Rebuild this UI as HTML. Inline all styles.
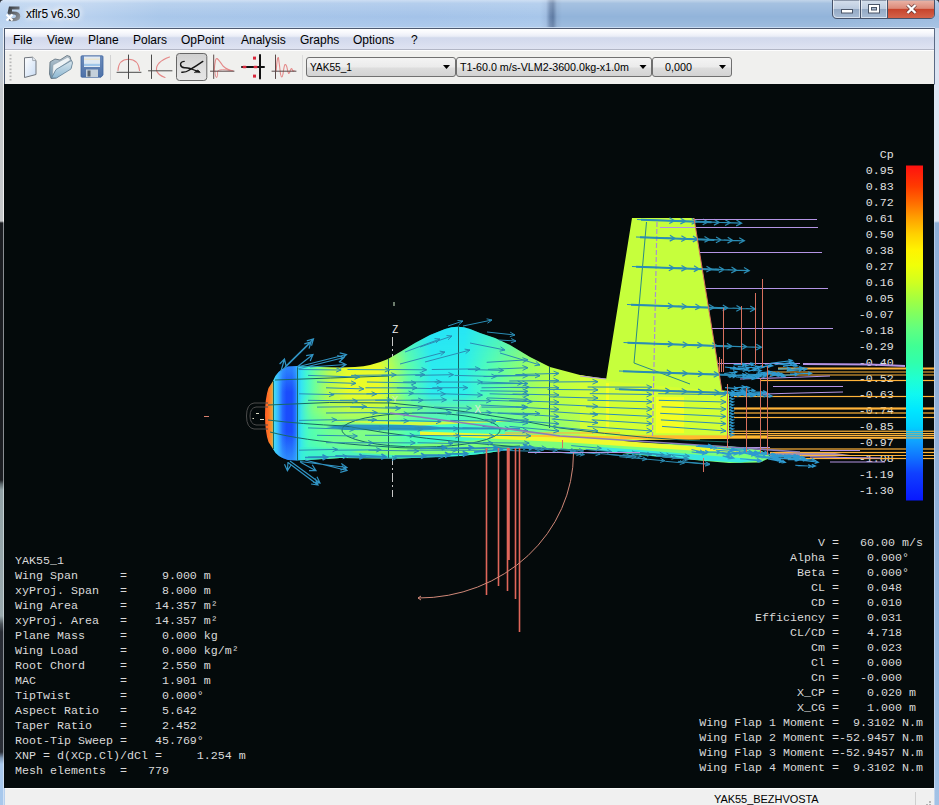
<!DOCTYPE html>
<html>
<head>
<meta charset="utf-8">
<title>xflr5 v6.30</title>
<style>
html,body{margin:0;padding:0;}
body{width:939px;height:805px;overflow:hidden;position:relative;background:#9fbfe6;font-family:"Liberation Sans",sans-serif;}
#frame{position:absolute;left:0;top:0;width:939px;height:805px;
 background:linear-gradient(90deg,#b6d0ee 0px,#bdd4f0 60px,#a9c7ea 160px,#a4c3e9 420px,#a7c6ea 540px,#9dbbe0 546px,#6b88b0 550px,#5d7aa2 553px,#8aaad0 557px,#92b4da 562px,#92b4da 830px,#9dbce0 939px);}
#frameL{position:absolute;left:0;top:28px;width:4px;height:777px;
 background:linear-gradient(180deg,#b2cbe8 0px,#bccbdc 30px,#c6c9cc 60px,#c4c6c8 193px,#1b1d21 195px,#1b1d21 452px,#5a666a 456px,#92a2a6 462px,#98a8ac 588px,#4a5258 596px,#282c34 604px,#2a2e36 724px,#7f9ab8 730px,#a8c8ec 736px,#a8c8ec 777px);}
#frameL2{position:absolute;left:3px;top:28px;width:1px;height:777px;
 background:linear-gradient(180deg,#e8eef6 0px,#f0f0f0 60px,#f0f0f0 193px,#8a8e92 195px,#8a8e92 452px,#c4d0d2 462px,#c4d0d2 588px,#8a9096 604px,#8a9096 724px,#d0e0f4 736px,#d0e0f4 777px);}
#frameL3{position:absolute;left:4px;top:28px;width:1px;height:56px;background:#4a5870;}
#frameR{position:absolute;left:935px;top:28px;width:4px;height:777px;
 background:linear-gradient(180deg,#cfdcf0 0px,#dde5f3 40px,#dfe6f4 193px,#90b0d8 195px,#92b2da 500px,#a2c2e6 777px);}
#frameR2{position:absolute;left:934px;top:28px;width:1px;height:777px;background:linear-gradient(180deg,#5a6a84 0px,#5a6a84 56px,#dfe8f2 57px,#dfe8f2 193px,#b8cce4 195px,#c4d6ec 777px);}
#titletxt{position:absolute;left:26px;top:6.500px;font-size:12px;letter-spacing:-0.15px;color:#000;text-shadow:0 0 6px #fff,0 0 6px #fff,0 0 8px #fff;}
#menubar{position:absolute;left:5px;top:28px;width:929px;height:20px;
 background:linear-gradient(180deg,#ffffff 0%,#f6f7fc 20%,#eaedf7 36%,#d2d9ec 44%,#d6dcee 65%,#dfe3f2 100%);border-top:1px solid #4e5a70;border-bottom:1px solid #b2b6c6;box-sizing:content-box;}
#menubar span{position:absolute;top:4px;font-size:12px;color:#000;}
#toolbar{position:absolute;left:5px;top:51px;width:929px;height:33px;background:#f0f0ee;}
#tbline{position:absolute;left:5px;top:50px;width:929px;height:1px;background:#fdfdfd;}
#canvas{position:absolute;left:4px;top:84px;width:930px;height:704px;background:#040a0b;overflow:hidden;}
#status{position:absolute;left:5px;top:788px;width:929px;height:17px;background:#f0f0f0;border-top:1px solid #fbfbfb;box-sizing:border-box;}
#status span{position:absolute;left:709px;top:4px;font-size:11px;color:#000;letter-spacing:-0.05px;}
.mono{font-family:"Liberation Mono",monospace;font-size:11.67px;color:#dadada;white-space:pre;position:absolute;line-height:15px;}
</style>
</head>
<body>
<div id="frame"></div>
<div id="frameL"></div><div id="frameL2"></div><div id="frameL3"></div>
<div id="frameR"></div><div id="frameR2"></div>
<svg id="tb" width="939" height="30" viewBox="0 0 939 30" style="position:absolute;left:0;top:0">
<defs>
<linearGradient id="gTitle" x1="0" y1="0" x2="0" y2="1"><stop offset="0" stop-color="#fff" stop-opacity="0.45"/><stop offset="0.12" stop-color="#fff" stop-opacity="0.18"/><stop offset="0.6" stop-color="#fff" stop-opacity="0"/><stop offset="1" stop-color="#fff" stop-opacity="0.12"/></linearGradient>
<linearGradient id="gWB" x1="0" y1="0" x2="0" y2="1"><stop offset="0" stop-color="#d5dfec"/><stop offset="0.48" stop-color="#bccbdf"/><stop offset="0.5" stop-color="#94a9c4"/><stop offset="1" stop-color="#a9bdd6"/></linearGradient>
<linearGradient id="gClose" x1="0" y1="0" x2="0" y2="1"><stop offset="0" stop-color="#e9b3a6"/><stop offset="0.45" stop-color="#dd8a78"/><stop offset="0.5" stop-color="#c7442c"/><stop offset="1" stop-color="#d4634a"/></linearGradient>
<linearGradient id="gIcon" x1="0" y1="0" x2="1" y2="1"><stop offset="0" stop-color="#30343a"/><stop offset="1" stop-color="#9aa0a8"/></linearGradient>
</defs>
<rect x="0" y="0" width="939" height="28" fill="url(#gTitle)"/><rect x="4" y="27" width="931" height="1" fill="#d4e4f6" opacity="0.8"/>
<path d="M0 0 H3 Q0.5 0.5 0 3 Z" fill="#2a2e36"/>
<path d="M939 0 H936 Q938.5 0.5 939 3 Z" fill="#2a2e36"/>
<!-- app icon -->
<g>
<path d="M9 6.5 H19.5 V9.5 H12 V11.5 Q20.5 11 20.3 16.5 Q20 21.5 12.5 21.3 L9 21 V18 Q16 19 16 16 Q15.5 13.5 8.5 14.5 L7.5 13 Z" fill="url(#gIcon)"/>
<path d="M6.5 14.5 L12.5 20.5 M12.5 14.5 L6.5 20.5" stroke="#fff" stroke-width="2" fill="none"/>
</g>
<!-- window buttons -->
<path d="M832.5 0 V14 Q832.5 18.5 837 18.5 H930 Q934.5 18.5 934.5 14 V0 Z" fill="url(#gWB)" stroke="#46526a" stroke-width="1"/>
<path d="M888 0.5 H934 V14 Q934 18 930 18 H888 Z" fill="url(#gClose)"/>
<path d="M860.5 0 V18.5 M887.5 0 V18.5" stroke="#46526a" stroke-width="1" fill="none"/>
<path d="M833.5 0 V14 Q833.5 17.5 837 17.5 H859.5 V0 M861.5 0 V17.5 H886.5 V0" stroke="#fff" stroke-opacity="0.55" stroke-width="1" fill="none"/>
<rect x="841.5" y="9.5" width="11" height="3.5" fill="#fff" stroke="#4a5568" stroke-width="1"/>
<rect x="868.5" y="4.5" width="11" height="8.5" fill="#fff" stroke="#4a5568" stroke-width="1"/>
<rect x="871.5" y="7.5" width="5" height="2.5" fill="#a9b9ce" stroke="#4a5568" stroke-width="1"/>
<path d="M907.5 5 L915.5 13 M915.5 5 L907.5 13" stroke="#5a3030" stroke-width="3.6" fill="none"/>
<path d="M907.5 5 L915.5 13 M915.5 5 L907.5 13" stroke="#fff" stroke-width="2.4" fill="none"/>
</svg>
<div id="titletxt">xflr5 v6.30</div>
<div id="menubar">
<span style="left:8px">File</span><span style="left:42px">View</span><span style="left:83px">Plane</span><span style="left:128px">Polars</span><span style="left:176px">OpPoint</span><span style="left:236px">Analysis</span><span style="left:295px">Graphs</span><span style="left:348px">Options</span><span style="left:406px">?</span>
</div>
<div id="tbline"></div>
<div id="toolbar">
<svg width="929" height="33" viewBox="5 51 929 33" style="position:absolute;left:0;top:0">
<defs>
<linearGradient id="gDoc" x1="0" y1="0" x2="1" y2="1"><stop offset="0" stop-color="#ffffff"/><stop offset="1" stop-color="#c9dcf4"/></linearGradient>
<linearGradient id="gFold" x1="0" y1="0" x2="0" y2="1"><stop offset="0" stop-color="#b9c6d0"/><stop offset="1" stop-color="#6f93ac"/></linearGradient>
<linearGradient id="gFold2" x1="0" y1="0" x2="0" y2="1"><stop offset="0" stop-color="#d8e6ee"/><stop offset="1" stop-color="#8fb8d2"/></linearGradient>
<linearGradient id="gFlop" x1="0" y1="0" x2="0" y2="1"><stop offset="0" stop-color="#6c8cbc"/><stop offset="1" stop-color="#4f72a8"/></linearGradient>
<linearGradient id="gBtn" x1="0" y1="0" x2="0" y2="1"><stop offset="0" stop-color="#cfcfcf"/><stop offset="0.5" stop-color="#dedede"/><stop offset="1" stop-color="#e6e6e6"/></linearGradient>
<linearGradient id="gCombo" x1="0" y1="0" x2="0" y2="1"><stop offset="0" stop-color="#f4f4f4"/><stop offset="0.5" stop-color="#ebebeb"/><stop offset="0.55" stop-color="#dddddd"/><stop offset="1" stop-color="#d2d2d2"/></linearGradient>
</defs>
<!-- gripper -->
<g fill="#b9b9b9">
<rect x="9.5" y="54.5" width="2" height="1.6"/><rect x="9.5" y="58" width="2" height="1.6"/><rect x="9.5" y="61.5" width="2" height="1.6"/><rect x="9.5" y="65" width="2" height="1.6"/><rect x="9.5" y="68.5" width="2" height="1.6"/><rect x="9.5" y="72" width="2" height="1.6"/><rect x="9.5" y="75.5" width="2" height="1.6"/><rect x="9.5" y="79" width="2" height="1.6"/>
</g>
<!-- new doc -->
<path d="M24.5 57.8 L32.5 57.2 L36 60.5 L36 74.5 L24.5 77.5 Z" fill="url(#gDoc)" stroke="#70767e" stroke-width="1"/>
<path d="M32.5 57.2 L32.7 60.6 L36 60.5" fill="#e8eef6" stroke="#8a9098" stroke-width="0.7"/>
<!-- open folder -->
<path d="M50 62 L55 59 L60 60 L67 55.5 L70 56.5 L71 60 L72 62 L71 68 L56 78 L51 78.5 L49.5 74 Z" fill="url(#gFold)" stroke="#5b6c78" stroke-width="0.8"/>
<path d="M53 65 L68 57 L70.5 60 L56 70 L52.5 76 Z" fill="#eef3f6" stroke="#8a98a2" stroke-width="0.5"/>
<path d="M56 69.5 L71.5 60.5 L72.5 63 L71 69 L56.5 78 L51.5 78 Z" fill="url(#gFold2)" stroke="#5b7a90" stroke-width="0.7"/>
<!-- floppy -->
<path d="M82 55.8 L102 55.8 Q103 55.8 103 56.8 L103 75 L101 77.2 L82 77.2 Q81 77.2 81 76.2 L81 56.8 Q81 55.8 82 55.8 Z" fill="url(#gFlop)" stroke="#3f64a0" stroke-width="0.8"/>
<rect x="84" y="56.5" width="16" height="10.5" fill="#dfe9f3"/>
<rect x="84" y="58.5" width="16" height="1.5" fill="#e9e4cf"/>
<rect x="84" y="63.8" width="16" height="2.2" fill="#9fc6ea"/>
<rect x="86" y="69.5" width="12" height="7.5" fill="#c5d0da"/>
<rect x="87.5" y="70.5" width="3" height="6" fill="#5a646e"/>
<!-- separator -->
<rect x="110" y="55" width="1" height="25" fill="#d2d2d2"/>
<!-- icon: arc -->
<g fill="none" stroke-linecap="round">
<path d="M118 70.5 Q118.5 59.5 128.5 59.3 Q138.5 59.5 139.5 70.5" stroke="#e48888" stroke-width="1.1"/>
<path d="M128.5 55 V78.5 M117 72.3 H141" stroke="#4a4a4a" stroke-width="1"/>
<!-- icon: polar -->
<path d="M169.5 57 Q155.5 62 156.5 70.5 Q158 75 165 77.5" stroke="#e48888" stroke-width="1.1"/>
<path d="M151.5 55 V78.5 M148.5 70.8 H172" stroke="#4a4a4a" stroke-width="1"/>
</g>
<!-- pressed button -->
<rect x="176.5" y="53.500" width="30.300" height="27" rx="3" ry="3" fill="url(#gBtn)" stroke="#666" stroke-width="1"/>
<g fill="none" stroke="#151515" stroke-linecap="round">
<path d="M184.200 61.400 Q180.200 61.800 180.600 64.800 Q181 67.400 184.500 67.700 Q187.500 67.600 190 68.500" stroke-width="1.400"/>
<path d="M181.800 72.200 Q186 72.400 189 70.200 Q196 66.300 202.800 61.400" stroke-width="1.400"/>
<path d="M190 68.500 L199.300 71.800" stroke-width="1.300"/>
<path d="M194.500 72.300 L198 69.900 L200 72.300 Z" fill="#151515" stroke-width="0.600"/>
</g>
<!-- icon: red spike -->
<g fill="none" stroke-linecap="round">
<path d="M214.2 71 Q215 58 217 58.5 Q219 60 223 66 Q228 70.5 233 70.8" stroke="#e48888" stroke-width="1.1"/>
<path d="M215 71 Q215.2 78 216.8 77.5 Q218 76 217.5 71 Q221 68.5 230 70.5" stroke="#e48888" stroke-width="0.9"/>
<path d="M213.7 55 V78.5 M210.5 71.2 H234" stroke="#5a4a4a" stroke-width="1"/>
<!-- icon: cross with dots -->
<path d="M260 55 V78.5" stroke="#111" stroke-width="2"/>
<path d="M242 67 H264" stroke="#111" stroke-width="2"/>
</g>
<g fill="#d8283c">
<rect x="253" y="56.6" width="3" height="3"/><rect x="253" y="74.6" width="3" height="3"/>
<rect x="242.5" y="65.8" width="4" height="2.4" rx="1"/><rect x="253.5" y="65.8" width="4" height="2.4" rx="1"/>
</g>
<!-- icon: oscillation -->
<g fill="none" stroke-linecap="round">
<path d="M276.2 71 Q277.3 55 278.5 58 Q279.6 66 280.5 74 Q281.8 80 283 74 Q284 66 285 64.5 Q286.5 64 287.5 70 Q288.5 75.5 289.8 72 Q291 67.5 292 69 Q293 72.5 294 70.5" stroke="#e48888" stroke-width="1.1"/>
<path d="M275.5 55 V78.5 M272 71.2 H296" stroke="#5a4a4a" stroke-width="1"/>
</g>
<rect x="302" y="55" width="1" height="25" fill="#dcdcdc"/>
<!-- combos -->
<rect x="306.5" y="57.5" width="149" height="19" rx="2.5" fill="url(#gCombo)" stroke="#707070" stroke-width="1"/>
<rect x="456.5" y="57.5" width="195" height="19" rx="2.5" fill="url(#gCombo)" stroke="#707070" stroke-width="1"/>
<rect x="652.5" y="57.5" width="79" height="19" rx="2.5" fill="url(#gCombo)" stroke="#707070" stroke-width="1"/>
<g fill="#000">
<path d="M443 65 L450 65 L446.5 69 Z"/><path d="M639.5 65 L646.5 65 L643 69 Z"/><path d="M719 65 L726 65 L722.5 69 Z"/>
</g>
<g font-family="Liberation Sans, sans-serif" font-size="11px" fill="#000">
<text id="cb1" x="310" y="71" textLength="42" lengthAdjust="spacingAndGlyphs">YAK55_1</text>
<text id="cb2" x="460" y="71" textLength="169" lengthAdjust="spacingAndGlyphs">T1-60.0 m/s-VLM2-3600.0kg-x1.0m</text>
<text id="cb3" x="665" y="71" textLength="27" lengthAdjust="spacingAndGlyphs">0,000</text>
</g>
</svg>
</div>
<div id="canvas">
<svg id="plot" width="930" height="704" viewBox="4 84 930 704" style="position:absolute;left:0;top:0">
<defs>
<linearGradient id="gFusH" gradientUnits="userSpaceOnUse" x1="264" y1="0" x2="730" y2="0">
<stop offset="0" stop-color="#ff5a20"/>
<stop offset="0.010" stop-color="#ff7428"/>
<stop offset="0.018" stop-color="#f0a030"/>
<stop offset="0.0195" stop-color="#48e8f0"/>
<stop offset="0.030" stop-color="#38b8ff"/>
<stop offset="0.040" stop-color="#2468ff"/>
<stop offset="0.048" stop-color="#1a4cfc"/>
<stop offset="0.060" stop-color="#1a4cfa"/>
<stop offset="0.0685" stop-color="#2478ff"/>
<stop offset="0.0715" stop-color="#2cc0ff"/>
<stop offset="0.080" stop-color="#34e4f4"/>
<stop offset="0.092" stop-color="#44f8d0"/>
<stop offset="0.11" stop-color="#70ff98"/>
<stop offset="0.14" stop-color="#b8fc50"/>
<stop offset="0.18" stop-color="#e8fc28"/>
<stop offset="0.245" stop-color="#ecfc28"/>
<stop offset="0.275" stop-color="#b0ff58"/>
<stop offset="0.31" stop-color="#60ffa8"/>
<stop offset="0.36" stop-color="#2cecf0"/>
<stop offset="0.43" stop-color="#2cf0ec"/>
<stop offset="0.49" stop-color="#58ffb0"/>
<stop offset="0.55" stop-color="#8cff74"/>
<stop offset="0.61" stop-color="#b8ff48"/>
<stop offset="0.70" stop-color="#d0ff38"/>
<stop offset="1" stop-color="#d8ff30"/>
</linearGradient>
<linearGradient id="gFusV" gradientUnits="userSpaceOnUse" x1="0" y1="326" x2="0" y2="462">
<stop offset="0" stop-color="#20d8ff" stop-opacity="0.45"/>
<stop offset="0.30" stop-color="#20d8ff" stop-opacity="0"/>
<stop offset="0.50" stop-color="#a0ff60" stop-opacity="0.0"/>
<stop offset="0.60" stop-color="#a0ff60" stop-opacity="0.45"/>
<stop offset="0.72" stop-color="#50ffb0" stop-opacity="0.65"/>
<stop offset="0.86" stop-color="#48ffb8" stop-opacity="0.7"/>
<stop offset="1" stop-color="#30f0e0" stop-opacity="0.85"/>
</linearGradient>
<linearGradient id="gBlueV" gradientUnits="userSpaceOnUse" x1="0" y1="362" x2="0" y2="462">
<stop offset="0" stop-color="#40c8ff" stop-opacity="0.55"/>
<stop offset="0.30" stop-color="#40c8ff" stop-opacity="0"/>
<stop offset="0.70" stop-color="#40c8ff" stop-opacity="0"/>
<stop offset="1" stop-color="#40c8ff" stop-opacity="0.55"/>
</linearGradient>
<linearGradient id="gMaskR" gradientUnits="userSpaceOnUse" x1="298" y1="0" x2="610" y2="0">
<stop offset="0" stop-color="#fff" stop-opacity="0"/>
<stop offset="0.05" stop-color="#fff" stop-opacity="1"/>
<stop offset="0.70" stop-color="#fff" stop-opacity="1"/>
<stop offset="1" stop-color="#fff" stop-opacity="0"/>
</linearGradient>
<mask id="mV" maskUnits="userSpaceOnUse" x="260" y="300" width="500" height="200"><rect x="260" y="300" width="500" height="200" fill="url(#gMaskR)"/></mask>
<linearGradient id="gBar" gradientUnits="userSpaceOnUse" x1="0" y1="165" x2="0" y2="500">
<stop offset="0" stop-color="#ff1010"/>
<stop offset="0.063" stop-color="#ff3a00"/>
<stop offset="0.11" stop-color="#ff6a00"/>
<stop offset="0.158" stop-color="#ffa000"/>
<stop offset="0.206" stop-color="#ffd000"/>
<stop offset="0.254" stop-color="#fff400"/>
<stop offset="0.30" stop-color="#f0ff08"/>
<stop offset="0.35" stop-color="#d0ff20"/>
<stop offset="0.40" stop-color="#a4ff40"/>
<stop offset="0.445" stop-color="#80ff60"/>
<stop offset="0.49" stop-color="#60ff80"/>
<stop offset="0.54" stop-color="#40ff94"/>
<stop offset="0.59" stop-color="#30ffac"/>
<stop offset="0.636" stop-color="#20ffd0"/>
<stop offset="0.684" stop-color="#10f8f0"/>
<stop offset="0.73" stop-color="#00e8ff"/>
<stop offset="0.78" stop-color="#00d0ff"/>
<stop offset="0.827" stop-color="#10a0ff"/>
<stop offset="0.875" stop-color="#1070ff"/>
<stop offset="0.92" stop-color="#1040ff"/>
<stop offset="1" stop-color="#0818ff"/>
</linearGradient>
<clipPath id="cFus"><path d="M265 415 Q265 398 268.500 388 L273 381 Q277 370 288 366.500 L297 366 L320 367 L340 367.500 L355 367 Q372 366 388 359 L400 352 L415 343 L430 335 L445 329 Q458 324.500 470 329 L480 333 L495 338 L510 345 L520 351 L530 357 L540 362 L550 367 L565 371 L580 375 L600 378 L729 391 L729 439 L640 440 L560 447 L524 447.500 L480 454 L460 456 L400 458.500 L340 458 L297 460.500 L288 460 Q277 457 273 449 L268.500 442 Q265 432 265 415 Z"/></clipPath>
</defs>
<path d="M392.500 337 V497" stroke="#c8c8c8" stroke-width="1" stroke-dasharray="9 3 2 3" fill="none"/>
<g clip-path="url(#cFus)">
<rect x="260" y="320" width="480" height="150" fill="url(#gFusH)"/>
<rect x="260" y="320" width="480" height="150" fill="url(#gFusV)" mask="url(#mV)"/>
<path d="M300 447 L420 451 L524 445 L524 452 L300 462 Z" fill="#38f0d0" opacity="0.5"/>
<rect x="273.500" y="360" width="23.500" height="105" fill="url(#gBlueV)"/>
</g>
<path d="M632 218 L694 218 L722 391 L729 391 L729 436 L600 436 L606 380 Z" fill="#c6ff3c"/>
<path d="M606 381 L729 392 L729 434 L600 434 L600 379 Z" fill="#d4ff34"/>
<rect x="599" y="383" width="10" height="46" fill="#f6ff24"/>
<rect x="656" y="397" width="28" height="36" fill="#f4ff24"/>
<path d="M580 375 L606 380 L606 436 L580 440 Z" fill="#d2ff38"/>
<path d="M350 452 L440 442 L520 438 L640 443 L729 446 L760 450 L772 457 L760 462.500 L729 463 L700 460.500 L640 455 L600 450.500 L524 447.500 L420 457 Z" fill="#7cff7a"/>
<path d="M420 431.500 L560 436 L700 447 L750 452 L700 451 L560 442 L420 435 Z" fill="#eefa30"/>
<path d="M600 447 L640 450 L740 458 L765 460 L740 462.500 L700 460.300 L640 454.800 L600 450.300 Z" fill="#38e8e0"/>
<path d="M770 452 L835 453 L850 455 L835 456.500 L770 457 Z" fill="#c4a4c8" opacity="0.85"/>
<path d="M326 427 L345 424.500 L420 425 L440 427 L520 428 L520 429.500 L440 429.500 L420 430.500 L345 430 Z" fill="#2a96c4"/>
<path d="M330 421 L420 422 L540 420 L420 425.500 Z" fill="#f0fa28" opacity="0.8"/>
<path d="M500 434 L700 438 L700 440.500 L500 436 Z" fill="#ffc828"/>
<path d="M640 440.500 L729 439 L935 439 L935 446 L729 446 L690 444 Z" fill="#040a0b"/>
<rect x="620" y="435.300" width="147" height="3.400" fill="#ffb830"/>
<rect x="767" y="434.900" width="167" height="1.200" fill="#ffb43a"/><rect x="767" y="436.800" width="167" height="2" fill="#ffb43a"/>
<rect x="729" y="433" width="205" height="1.200" fill="#ffb43a"/>
<rect x="505" y="432.300" width="115" height="1.300" fill="#ffb040" opacity="0.85"/>
<g font-family="Liberation Mono, monospace" font-size="11.67" fill="#e0e0e0" text-anchor="end">
<text x="893.800" y="157.800">Cp</text>
<text x="893.700" y="173.8">0.95</text>
<text x="893.700" y="189.8">0.83</text>
<text x="893.700" y="205.8">0.72</text>
<text x="893.700" y="221.8">0.61</text>
<text x="893.700" y="237.8">0.50</text>
<text x="893.700" y="253.8">0.38</text>
<text x="893.700" y="269.8">0.27</text>
<text x="893.700" y="285.8">0.16</text>
<text x="893.700" y="301.8">0.05</text>
<text x="893.700" y="317.8">-0.07</text>
<text x="893.700" y="333.8">-0.18</text>
<text x="893.700" y="349.8">-0.29</text>
<text x="893.700" y="365.8">-0.40</text>
<text x="893.700" y="381.8">-0.52</text>
<text x="893.700" y="397.8">-0.63</text>
<text x="893.700" y="413.8">-0.74</text>
<text x="893.700" y="429.8">-0.85</text>
<text x="893.700" y="445.8">-0.97</text>
<text x="893.700" y="461.8">-1.08</text>
<text x="893.700" y="477.8">-1.19</text>
<text x="893.700" y="493.8">-1.30</text>
</g>
<rect x="778" y="367.5" width="156" height="2" fill="#ffb43a"/>
<rect x="767" y="371.5" width="167" height="1" fill="#ffb43a"/>
<rect x="770" y="374.5" width="164" height="1" fill="#ffb43a"/>
<rect x="760" y="379.9" width="174" height="1.2" fill="#ffb43a"/>
<rect x="734" y="395.9" width="200" height="1.2" fill="#ffb43a"/>
<rect x="734" y="407.4" width="200" height="2.2" fill="#ffb43a"/>
<rect x="734" y="412.4" width="200" height="1.2" fill="#ffb43a"/>
<rect x="734" y="416.9" width="200" height="1.2" fill="#ffb43a"/>
<rect x="729" y="430.6" width="205" height="1.2" fill="#ffb43a"/>
<rect x="760" y="448.4" width="174" height="1.2" fill="#ffb43a"/>
<rect x="770" y="451.9" width="164" height="1.2" fill="#ffb43a"/>
<rect x="780" y="457.9" width="154" height="1.2" fill="#ffb43a"/>
<rect x="800" y="455" width="134" height="1" fill="#ffb43a"/>
<path d="M273.500 381 V449 M297.5 366 V460.5 M388.5 359 V458.4 M458.5 325.5 V456.083 M549.500 367 V428 M268 405 Q330 401 390 403 Q470 410 560 428 Q650 440 729 442 M268 420 Q300 424 345 426 Q420 440 520 447 M270 432 Q300 440 360 445 Q440 452 520 446 M275 380 Q330 378 388 376" fill="none" stroke="#176a66" stroke-width="1"/>
<ellipse cx="421" cy="430" rx="79" ry="17" fill="none" stroke="#176a66" stroke-width="1"/>
<path d="M646.500 222 L634 363 L690 384" fill="none" stroke="#2a8a86" stroke-width="1"/>
<path d="M657 222 L652.500 436" fill="none" stroke="#a890d0" stroke-width="1.200" stroke-dasharray="5 2"/>
<path d="M299.0 369.5 L341.1 370.0 M336.1 367.7 L341.1 370.0 L336.1 372.1 M347.5 369.5 L389.9 369.8 M384.9 367.6 L389.9 369.8 L384.8 372.0 M389.2 369.5 L426.6 369.8 M421.6 367.5 L426.6 369.8 L421.5 372.0 M431.8 369.5 L480.1 368.8 M475.0 366.6 L480.1 368.8 L475.1 371.1 M467.9 369.5 L503.5 370.4 M498.6 368.0 L503.5 370.4 L498.5 372.5 M308.0 375.4 L359.7 377.1 M354.7 374.7 L359.7 377.1 L354.6 379.2 M351.1 375.4 L396.2 374.9 M391.1 372.7 L396.2 374.9 L391.2 377.2 M381.4 375.4 L424.9 374.6 M419.8 372.5 L424.9 374.6 L419.9 377.0 M415.2 375.4 L453.5 374.7 M448.5 372.5 L453.5 374.7 L448.6 377.0 M454.5 375.4 L496.4 376.5 M491.4 374.1 L496.4 376.5 L491.3 378.6 M494.8 375.4 L540.0 375.7 M535.0 373.4 L540.0 375.7 L535.0 377.9 M317.0 382.0 L356.0 383.4 M351.1 380.9 L356.0 383.4 L350.9 385.4 M366.9 382.0 L416.0 382.9 M411.1 380.6 L416.0 382.9 L411.0 385.1 M403.2 382.0 L441.4 381.8 M436.3 379.6 L441.4 381.8 L436.3 384.1 M434.6 382.0 L482.4 382.1 M477.4 379.8 L482.4 382.1 L477.4 384.3 M481.6 382.0 L522.5 383.3 M517.6 380.9 L522.5 383.3 L517.4 385.4 M326.0 387.8 L363.8 388.9 M358.8 386.5 L363.8 388.9 L358.7 391.0 M365.4 387.8 L417.0 387.9 M412.0 385.6 L417.0 387.9 L412.0 390.1 M396.9 387.8 L442.2 388.8 M437.2 386.5 L442.2 388.8 L437.1 391.0 M432.3 387.8 L467.8 387.7 M462.8 385.5 L467.8 387.7 L462.8 390.0 M481.5 387.8 L529.2 387.2 M524.1 385.0 L529.2 387.2 L524.2 389.5 M299.0 393.8 L334.1 394.6 M329.1 392.3 L334.1 394.6 L329.0 396.7 M332.6 393.8 L376.6 394.0 M371.6 391.7 L376.6 394.0 L371.6 396.2 M366.4 393.8 L413.5 393.2 M408.5 391.0 L413.5 393.2 L408.5 395.5 M409.2 393.8 L445.3 393.9 M440.3 391.6 L445.3 393.9 L440.3 396.1 M443.5 393.8 L482.4 395.1 M477.4 392.7 L482.4 395.1 L477.3 397.2 M489.6 393.8 L529.0 394.9 M524.1 392.5 L529.0 394.9 L524.0 397.0 M308.0 400.3 L357.4 401.0 M352.4 398.7 L357.4 401.0 L352.3 403.2 M340.0 400.3 L391.8 399.9 M386.8 397.7 L391.8 399.9 L386.8 402.1 M375.2 400.3 L423.1 400.2 M418.1 398.0 L423.1 400.2 L418.1 402.5 M411.1 400.3 L446.4 399.8 M441.4 397.6 L446.4 399.8 L441.4 402.1 M452.8 400.3 L491.1 400.8 M486.1 398.5 L491.1 400.8 L486.1 403.0 M490.2 400.3 L532.3 401.7 M527.4 399.3 L532.3 401.7 L527.3 403.7 M317.0 407.1 L366.6 406.6 M361.6 404.4 L366.6 406.6 L361.6 408.9 M350.1 407.1 L400.4 408.4 M395.5 406.0 L400.4 408.4 L395.4 410.5 M385.1 407.1 L422.5 407.9 M417.5 405.6 L422.5 407.9 L417.4 410.0 M433.9 407.1 L471.4 408.3 M466.5 405.9 L471.4 408.3 L466.3 410.4 M481.5 407.1 L526.4 407.3 M521.4 405.0 L526.4 407.3 L521.4 409.5 M326.0 413.0 L377.3 412.6 M372.3 410.4 L377.3 412.6 L372.3 414.9 M370.1 413.0 L408.7 414.0 M403.8 411.6 L408.7 414.0 L403.6 416.1 M412.0 413.0 L451.3 412.6 M446.3 410.4 L451.3 412.6 L446.3 414.9 M456.4 413.0 L491.7 412.7 M486.6 410.5 L491.7 412.7 L486.7 415.0 M497.6 413.0 L540.0 413.6 M535.0 411.3 L540.0 413.6 L534.9 415.8 M299.0 420.4 L336.7 419.7 M331.6 417.6 L336.7 419.7 L331.7 422.1 M334.4 420.4 L376.4 419.7 M371.3 417.6 L376.4 419.7 L371.4 422.1 M367.9 420.4 L408.5 420.9 M403.6 418.6 L408.5 420.9 L403.5 423.1 M400.5 420.4 L441.1 421.6 M436.1 419.2 L441.1 421.6 L436.0 423.7 M450.2 420.4 L496.0 421.3 M491.0 418.9 L496.0 421.3 L490.9 423.4 M491.8 420.4 L528.4 419.8 M523.3 417.6 L528.4 419.8 L523.4 422.1 M308.0 427.9 L354.6 429.4 M349.7 427.0 L354.6 429.4 L349.5 431.5 M338.4 427.9 L383.9 428.2 M378.9 425.9 L383.9 428.2 L378.8 430.4 M383.0 427.9 L422.8 429.3 M417.8 426.9 L422.8 429.3 L417.7 431.3 M414.5 427.9 L458.4 428.8 M453.4 426.4 L458.4 428.8 L453.3 430.9 M462.5 427.9 L509.8 428.8 M504.8 426.4 L509.8 428.8 L504.7 430.9 M317.0 435.3 L357.3 436.0 M352.4 433.7 L357.3 436.0 L352.3 438.2 M365.0 435.3 L414.7 435.5 M409.7 433.2 L414.7 435.5 L409.7 437.7 M410.8 435.3 L460.4 435.9 M455.4 433.6 L460.4 435.9 L455.3 438.1 M453.3 435.3 L494.2 435.8 M489.2 433.5 L494.2 435.8 L489.2 438.0 M495.5 435.3 L530.9 435.9 M526.0 433.6 L530.9 435.9 L525.9 438.0 M326.0 442.7 L373.1 442.8 M368.1 440.5 L373.1 442.8 L368.1 445.0 M370.7 442.7 L415.2 442.9 M410.1 440.6 L415.2 442.9 L410.1 445.1 M417.5 442.7 L453.0 443.5 M448.0 441.1 L453.0 443.5 L447.9 445.6 M448.1 442.7 L492.9 443.0 M487.9 440.7 L492.9 443.0 L487.9 445.2 M482.7 442.7 L529.2 443.1 M524.2 440.8 L529.2 443.1 L524.2 445.3 M299.0 450.2 L337.6 449.4 M332.5 447.3 L337.6 449.4 L332.6 451.8 M335.0 450.2 L381.2 449.8 M376.2 447.6 L381.2 449.8 L376.2 452.0 M368.4 450.2 L418.7 451.0 M413.7 448.7 L418.7 451.0 L413.7 453.2 M407.3 450.2 L457.3 450.1 M452.3 447.8 L457.3 450.1 L452.3 452.3 M450.6 450.2 L488.1 450.3 M483.1 448.0 L488.1 450.3 L483.1 452.5 M496.7 450.2 L540.0 451.4 M535.0 449.0 L540.0 451.4 L534.9 453.5 M308.0 457.0 L347.7 456.5 M342.6 454.3 L347.7 456.5 L342.7 458.8 M347.9 457.0 L397.0 458.3 M392.0 456.0 L397.0 458.3 L391.9 460.4 M392.2 457.0 L443.3 456.8 M438.2 454.6 L443.3 456.8 L438.2 459.0 M486.7 362.3 L528.0 359.8 M522.4 357.7 L528.0 359.8 L522.7 362.6 M487.9 369.4 L528.0 367.7 M522.4 365.5 L528.0 367.7 L522.6 370.4 M483.6 376.6 L528.0 375.6 M522.5 373.3 L528.0 375.6 L522.6 378.2 M480.6 383.7 L528.0 383.5 M522.5 381.1 L528.0 383.5 L522.5 386.0 M480.3 390.8 L528.0 391.4 M522.6 388.9 L528.0 391.4 L522.5 393.8 M487.0 397.9 L528.0 399.4 M522.6 396.7 L528.0 399.4 L522.4 401.6 M480.3 405.0 L528.0 407.3 M522.6 404.6 L528.0 407.3 L522.4 409.5 M485.7 412.2 L528.0 415.2 M522.7 412.3 L528.0 415.2 L522.4 417.2 M484.6 419.3 L528.0 423.1 M522.8 420.2 L528.0 423.1 L522.3 425.0 M482.5 426.4 L528.0 431.0 M522.8 428.0 L528.0 431.0 L522.3 432.9 M515.3 374.6 L559.0 373.4 M553.5 371.1 L559.0 373.4 L553.6 376.0 M509.2 381.0 L559.0 380.6 M553.5 378.2 L559.0 380.6 L553.5 383.1 M510.1 387.5 L559.0 387.8 M553.5 385.3 L559.0 387.8 L553.5 390.2 M512.6 394.0 L559.0 395.0 M553.6 392.4 L559.0 395.0 L553.5 397.3 M509.2 400.5 L559.0 402.2 M553.6 399.6 L559.0 402.2 L553.4 404.5 M515.6 407.0 L559.0 409.4 M553.7 406.6 L559.0 409.4 L553.4 411.5 M510.9 413.4 L559.0 416.6 M553.7 413.8 L559.0 416.6 L553.4 418.7 M510.1 419.9 L559.0 423.8 M553.7 420.9 L559.0 423.8 L553.3 425.8 M509.4 426.4 L559.0 431.0 M553.8 428.1 L559.0 431.0 L553.3 432.9 M549.0 382.0 L598.0 381.7 M592.5 379.3 L598.0 381.7 L592.5 384.2 M547.6 389.4 L598.0 389.9 M592.5 387.4 L598.0 389.9 L592.5 392.3 M549.0 396.8 L598.0 398.1 M592.6 395.5 L598.0 398.1 L592.5 400.4 M549.2 404.2 L598.0 406.4 M592.6 403.7 L598.0 406.4 L592.4 408.6 M550.5 411.6 L598.0 414.6 M592.7 411.8 L598.0 414.6 L592.4 416.7 M551.7 419.0 L598.0 422.8 M592.7 419.9 L598.0 422.8 L592.3 424.8 M549.5 426.4 L598.0 431.0 M592.8 428.0 L598.0 431.0 L592.3 432.9 M587.6 387.0 L652.0 387.2 M646.5 384.8 L652.0 387.2 L646.5 389.7 M589.8 393.6 L652.0 394.5 M646.6 392.0 L652.0 394.5 L646.5 396.9 M587.4 400.1 L652.0 401.8 M646.6 399.2 L652.0 401.8 L646.5 404.1 M586.1 406.7 L652.0 409.1 M646.6 406.5 L652.0 409.1 L646.4 411.4 M589.8 413.3 L652.0 416.4 M646.7 413.7 L652.0 416.4 L646.4 418.6 M591.7 419.8 L652.0 423.7 M646.7 420.9 L652.0 423.7 L646.4 425.8 M587.4 426.4 L652.0 431.0 M646.7 428.2 L652.0 431.0 L646.4 433.1 M658.2 393.7 L726.0 394.7 M720.6 392.2 L726.0 394.7 L720.5 397.1 M658.8 400.3 L726.0 402.0 M720.6 399.4 L726.0 402.0 L720.5 404.3 M661.6 406.8 L726.0 409.2 M720.6 406.6 L726.0 409.2 L720.4 411.5 M660.2 413.3 L726.0 416.5 M720.6 413.8 L726.0 416.5 L720.4 418.7 M660.9 419.9 L726.0 423.7 M720.7 421.0 L726.0 423.7 L720.4 425.9 M662.0 426.4 L726.0 431.0 M720.7 428.2 L726.0 431.0 L720.4 433.0 M560.5 448.8 L583.6 450.9 M579.3 448.4 L583.6 450.9 L578.9 452.5 M622.7 454.7 L641.6 456.4 M637.2 454.0 L641.6 456.4 L636.9 458.1 M522.2 447.9 L543.9 449.8 M539.5 447.4 L543.9 449.8 L539.1 451.5 M559.8 452.4 L584.4 454.6 M580.1 452.1 L584.4 454.6 L579.7 456.2 M662.2 456.9 L689.1 459.3 M684.8 456.9 L689.1 459.3 L684.4 460.9 M545.6 448.3 L575.8 451.0 M571.4 448.5 L575.8 451.0 L571.0 452.6 M608.9 454.5 L636.3 457.0 M632.0 454.5 L636.3 457.0 L631.6 458.6 M530.9 448.0 L557.2 450.4 M552.8 447.9 L557.2 450.4 L552.4 452.0 M571.2 445.6 L601.3 448.3 M597.0 445.9 L601.3 448.3 L596.6 449.9 M600.4 453.6 L630.7 456.3 M626.3 453.9 L630.7 456.3 L625.9 457.9 M641.4 458.7 L664.9 460.8 M660.6 458.4 L664.9 460.8 L660.2 462.4 M656.2 456.1 L687.3 458.9 M682.9 456.5 L687.3 458.9 L682.5 460.6 M669.4 454.5 L689.3 456.3 M684.9 453.8 L689.3 456.3 L684.6 457.9 M556.9 451.9 L581.0 454.0 M576.6 451.6 L581.0 454.0 L576.3 455.7 M626.5 452.5 L651.6 454.7 M647.3 452.3 L651.6 454.7 L646.9 456.3 M585.6 449.4 L611.8 451.7 M607.4 449.3 L611.8 451.7 L607.1 453.4 M619.3 456.7 L646.9 459.2 M642.5 456.7 L646.9 459.2 L642.1 460.8 M677.9 461.3 L709.8 464.1 M705.4 461.7 L709.8 464.1 L705.1 465.8 M634.1 452.0 L664.2 454.7 M659.8 452.3 L664.2 454.7 L659.4 456.3 M684.0 462.2 L710.0 464.5 M705.6 462.1 L710.0 464.5 L705.2 466.1 M641.3 453.0 L671.0 455.7 M666.6 453.2 L671.0 455.7 L666.3 457.3 M617.5 451.6 L636.4 453.3 M632.0 450.8 L636.4 453.3 L631.7 454.9 M665.2 461.3 L684.4 463.0 M680.0 460.5 L684.4 463.0 L679.7 464.6 M656.1 455.9 L676.2 457.7 M671.8 455.2 L676.2 457.7 L671.5 459.3 M570.0 451.4 L600.2 454.1 M595.8 451.7 L600.2 454.1 L595.5 455.7 M527.5 446.6 L546.1 448.2 M541.8 445.8 L546.1 448.2 L541.4 449.9 M405.0 352.0 L440.0 339.0 M434.5 338.6 L440.0 339.0 L436.1 342.9 M420.0 347.0 L452.0 336.0 M446.5 335.5 L452.0 336.0 L448.0 339.8 M448.0 326.0 L463.0 321.0 M457.5 320.5 L463.0 321.0 L458.9 324.7 M463.0 326.0 L492.0 320.0 M486.6 318.8 L492.0 320.0 L487.5 323.2 M487.0 332.0 L515.0 335.0 M510.2 332.2 L515.0 335.0 L509.8 336.7 M499.0 340.0 L516.0 341.0 M511.1 338.5 L516.0 341.0 L510.9 342.9 M425.0 362.0 L470.0 350.0 M464.6 349.1 L470.0 350.0 L465.7 353.5 M400.0 364.0 L445.0 352.0 M439.6 351.1 L445.0 352.0 L440.7 355.5 M470.0 343.0 L505.0 350.0 M500.5 346.8 L505.0 350.0 L499.6 351.2 M500.0 353.0 L540.0 365.0 M535.8 361.4 L540.0 365.0 L534.5 365.7" fill="none" stroke="#2b8db5" stroke-width="1"/>
<path d="M305.0 457.5 L327.3 457.2 M322.4 454.7 L327.3 457.2 L322.5 459.9 M335.3 455.8 L364.2 456.7 M359.4 453.9 L364.2 456.7 L359.3 459.2 M363.0 455.7 L386.1 456.9 M381.4 454.0 L386.1 456.9 L381.1 459.3 M394.5 456.0 L425.8 455.9 M421.0 453.3 L425.8 455.9 L421.0 458.6 M422.7 455.1 L449.8 454.9 M444.9 452.3 L449.8 454.9 L444.9 457.6 M447.5 454.0 L467.6 453.7 M462.7 451.2 L467.6 453.7 L462.8 456.4 M474.0 452.1 L502.2 449.2 M497.1 447.1 L502.2 449.2 L497.6 452.3 M496.8 449.0 L527.9 446.6 M522.9 444.3 L527.9 446.6 L523.3 449.6 M420.0 448.5 L446.0 447.5 M441.5 445.3 L446.0 447.5 L441.7 450.1 M446.8 448.5 L472.8 447.5 M468.3 445.3 L472.8 447.5 L468.5 450.1 M471.3 448.5 L497.3 447.5 M492.8 445.3 L497.3 447.5 L493.0 450.1 M507.3 448.5 L533.3 447.5 M528.8 445.3 L533.3 447.5 L529.0 450.1" fill="none" stroke="#2a8cc0" stroke-width="1.700"/>
<path d="M285.0 367.0 L313.5 339.0 M306.8 340.9 L313.5 339.0 L311.5 345.7 M283.5 369.0 L311.0 342.0 M304.3 343.9 L311.0 342.0 L309.0 348.7 M297.0 367.0 L313.0 354.5 M306.1 355.6 L313.0 354.5 L310.2 360.9 M297.0 367.0 L346.5 354.5 M339.7 352.8 L346.5 354.5 L341.4 359.3 M298.0 369.0 L344.0 357.5 M337.2 355.7 L344.0 357.5 L338.9 362.2 M310.0 367.0 L346.0 364.5 M339.6 361.6 L346.0 364.5 L340.1 368.3 M281.0 371.0 L284.5 359.0 M279.6 364.0 L284.5 359.0 L286.0 365.8 M288.0 462.5 L318.0 485.0 M315.1 478.6 L318.0 485.0 L311.1 484.0 M290.0 461.0 L320.0 483.0 M317.0 476.7 L320.0 483.0 L313.1 482.1 M288.0 462.0 L287.4 470.7 M291.2 464.8 L287.4 470.7 L284.5 464.3 M300.0 462.0 L316.0 470.7 M312.2 464.8 L316.0 470.7 L309.0 470.7 M300.0 461.5 L347.0 467.5 M341.3 463.4 L347.0 467.5 L340.5 470.1 M305.0 460.0 L347.0 470.5 M341.9 465.8 L347.0 470.5 L340.2 472.3" fill="none" stroke="#3194c4" stroke-width="1.200"/>
<path d="M641 219.7 L711.566 222.31 M640 237.2 L714.399 239.944 M636 266.7 L719.173 269.751 M631 304.7 L725.324 308.141 M627.5 342.7 L731.474 346.479 M623 371.2 L736.087 375.298 M619 389.2 L739 393.54" fill="none" stroke="#2b8db5" stroke-width="2"/>
<path d="M637 219.5 L741.566 223.16 M665.6 220.5 L674.6 220.8 M669.5 217.8 L674.6 220.8 L669.3 223.5 M676.8 220.9 L685.8 221.2 M680.6 218.2 L685.8 221.2 L680.4 223.9 M688.0 221.3 L697.0 221.6 M691.8 218.5 L697.0 221.6 L691.6 224.3 M699.1 221.7 L708.1 222.0 M702.9 218.9 L708.1 222.0 L702.7 224.7 M710.3 222.1 L719.3 222.4 M714.1 219.3 L719.3 222.4 L713.9 225.1 M721.4 222.5 L730.4 222.8 M725.2 219.7 L730.4 222.8 L725.1 225.5 M732.6 222.9 L741.6 223.2 M736.4 220.1 L741.6 223.2 L736.2 225.9 M636 237 L744.399 240.794 M666.0 238.1 L675.0 238.4 M669.9 235.3 L675.0 238.4 L669.7 241.1 M677.6 238.5 L686.6 238.8 M681.4 235.7 L686.6 238.8 L681.2 241.5 M689.1 238.9 L698.1 239.2 M693.0 236.1 L698.1 239.2 L692.8 241.9 M700.7 239.3 L709.7 239.6 M704.5 236.5 L709.7 239.6 L704.4 242.3 M712.3 239.7 L721.3 240.0 M716.1 236.9 L721.3 240.0 L715.9 242.7 M723.8 240.1 L732.8 240.4 M727.7 237.3 L732.8 240.4 L727.5 243.1 M735.4 240.5 L744.4 240.8 M739.2 237.7 L744.4 240.8 L739.0 243.5 M632 266.5 L749.173 270.601 M665.2 267.7 L674.2 268.0 M669.0 264.9 L674.2 268.0 L668.8 270.7 M677.7 268.1 L686.7 268.4 M681.5 265.4 L686.7 268.4 L681.3 271.1 M690.2 268.6 L699.2 268.9 M694.0 265.8 L699.2 268.9 L693.8 271.6 M702.7 269.0 L711.7 269.3 M706.5 266.2 L711.7 269.3 L706.3 272.0 M715.2 269.4 L724.2 269.7 M719.0 266.7 L724.2 269.7 L718.8 272.4 M727.7 269.9 L736.7 270.2 M731.5 267.1 L736.7 270.2 L731.3 272.9 M740.2 270.3 L749.2 270.6 M744.0 267.6 L749.2 270.6 L743.8 273.3 M627 304.5 L755.324 308.991 M664.2 305.8 L673.2 306.1 M668.0 303.1 L673.2 306.1 L667.8 308.8 M677.9 306.3 L686.9 306.6 M681.7 303.5 L686.9 306.6 L681.5 309.3 M691.6 306.8 L700.6 307.1 M695.4 304.0 L700.6 307.1 L695.2 309.8 M705.3 307.3 L714.3 307.6 M709.1 304.5 L714.3 307.6 L708.9 310.3 M718.9 307.7 L727.9 308.0 M722.8 305.0 L727.9 308.0 L722.6 310.7 M732.6 308.2 L741.6 308.5 M736.5 305.5 L741.6 308.5 L736.3 311.2 M746.3 308.7 L755.3 309.0 M750.2 305.9 L755.3 309.0 L750.0 311.7 M623.5 342.5 L761.474 347.329 M664.2 343.9 L673.2 344.2 M668.0 341.2 L673.2 344.2 L667.8 346.9 M678.9 344.5 L687.9 344.8 M682.7 341.7 L687.9 344.8 L682.5 347.5 M693.6 345.0 L702.6 345.3 M697.4 342.2 L702.6 345.3 L697.2 348.0 M708.3 345.5 L717.3 345.8 M712.2 342.7 L717.3 345.8 L712.0 348.5 M723.0 346.0 L732.0 346.3 M726.9 343.2 L732.0 346.3 L726.7 349.0 M737.8 346.5 L746.8 346.8 M741.6 343.8 L746.8 346.8 L741.4 349.5 M752.5 347.0 L761.5 347.3 M756.3 344.3 L761.5 347.3 L756.1 350.0 M619 371 L766.087 376.148 M663.0 372.6 L672.0 372.9 M666.8 369.8 L672.0 372.9 L666.6 375.6 M678.6 373.1 L687.6 373.4 M682.5 370.4 L687.6 373.4 L682.3 376.1 M694.3 373.7 L703.3 374.0 M698.2 370.9 L703.3 374.0 L698.0 376.7 M710.0 374.2 L719.0 374.5 M713.9 371.5 L719.0 374.5 L713.7 377.2 M725.7 374.7 L734.7 375.0 M729.5 372.0 L734.7 375.0 L729.3 377.7 M741.4 375.3 L750.4 375.6 M745.2 372.5 L750.4 375.6 L745.0 378.3 M757.1 375.8 L766.1 376.1 M760.9 373.1 L766.1 376.1 L760.7 378.8 M615 389 L769 394.39 M661.4 390.6 L670.4 390.9 M665.3 387.9 L670.4 390.9 L665.1 393.6 M677.9 391.2 L686.9 391.5 M681.7 388.5 L686.9 391.5 L681.5 394.2 M694.3 391.8 L703.3 392.1 M698.1 389.0 L703.3 392.1 L697.9 394.8 M710.7 392.4 L719.7 392.7 M714.6 389.6 L719.7 392.7 L714.4 395.4 M727.1 392.9 L736.1 393.2 M731.0 390.2 L736.1 393.2 L730.8 395.9 M743.6 393.5 L752.6 393.8 M747.4 390.8 L752.6 393.8 L747.2 396.5 M760.0 394.1 L769.0 394.4 M763.8 391.3 L769.0 394.4 L763.6 397.1" fill="none" stroke="#2b8db5" stroke-width="1.2"/>
<path d="M694 219.5 H817 M660 227.5 H818 M700 252.5 H822 M706 288.5 H828 M712 328.5 H833 M718 363.5 H800 M528 452.500 H640 M580 376 L606 379 M740 379 L790 377.500 L830 376 M773 386.500 H843 M763 394 L800 393 L843 392 M730 447.500 H770 M820 450.500 H860 M830 462 H885 M810 457 L880 458" fill="none" stroke="#b494e4" stroke-width="1.1"/>
<path d="M803 364 L870 364.500 L905 366" fill="none" stroke="#b494e4" stroke-width="2"/>
<path d="M390 413 L560 436 L729 447 L800 452" fill="none" stroke="#8a7cba" stroke-width="1.700"/>
<path d="M765.1 373.2 L784.2 374.9 M780.8 372.9 L784.2 374.9 L780.5 376.2 M772.8 375.4 L781.2 374.8 M777.5 373.4 L781.2 374.8 L777.7 376.7 M786.3 371.2 L806.9 368.8 M803.1 367.6 L806.9 368.8 L803.4 370.8 M755.0 366.5 L770.6 366.4 M766.9 364.8 L770.6 366.4 L766.9 368.1 M724.9 367.0 L736.8 368.6 M733.4 366.5 L736.8 368.6 L732.9 369.7 M774.5 364.7 L793.7 362.4 M789.9 361.2 L793.7 362.4 L790.3 364.5 M764.8 364.6 L772.8 365.9 M769.4 363.7 L772.8 365.9 L768.9 366.9 M737.8 366.6 L759.6 368.0 M756.0 366.1 L759.6 368.0 L755.8 369.4 M743.1 376.9 L758.6 377.3 M755.0 375.6 L758.6 377.3 L755.0 378.8 M737.5 376.8 L755.2 378.6 M751.7 376.6 L755.2 378.6 L751.4 379.8 M783.0 366.4 L796.0 364.2 M792.2 363.2 L796.0 364.2 L792.7 366.5 M733.6 364.6 L745.8 364.6 M742.2 363.0 L745.8 364.6 L742.2 366.3 M724.2 373.5 L737.0 372.0 M733.1 370.8 L737.0 372.0 L733.5 374.1 M778.0 369.1 L790.4 368.5 M786.7 367.1 L790.4 368.5 L786.9 370.3 M770.5 363.4 L792.2 360.5 M788.3 359.4 L792.2 360.5 L788.8 362.6 M773.5 374.3 L781.7 375.3 M778.3 373.2 L781.7 375.3 L777.9 376.5 M748.2 371.4 L756.3 368.6 M752.3 368.2 L756.3 368.6 L753.4 371.3 M735.9 377.0 L746.7 377.8 M743.2 375.9 L746.7 377.8 L742.9 379.2 M785.4 375.3 L798.2 374.1 M794.4 372.8 L798.2 374.1 L794.7 376.1 M758.6 373.8 L768.1 374.6 M764.6 372.7 L768.1 374.6 L764.4 375.9 M776.6 374.5 L785.1 376.2 M781.9 373.9 L785.1 376.2 L781.2 377.1 M730.0 368.6 L746.6 370.2 M743.1 368.2 L746.6 370.2 L742.8 371.5 M746.4 376.3 L762.1 374.8 M758.3 373.5 L762.1 374.8 L758.6 376.8 M744.9 365.9 L754.0 363.6 M750.1 362.9 L754.0 363.6 L750.9 366.1 M769.5 376.6 L779.7 373.8 M775.8 373.2 L779.7 373.8 L776.6 376.4 M789.1 369.5 L802.8 367.7 M799.0 366.6 L802.8 367.7 L799.4 369.8 M763.2 374.4 L777.6 373.5 M773.8 372.1 L777.6 373.5 L774.0 375.4 M727.7 376.7 L736.1 376.2 M732.4 374.8 L736.1 376.2 L732.6 378.0 M779.3 364.2 L797.6 365.9 M794.1 363.9 L797.6 365.9 L793.8 367.2 M765.6 373.8 L775.1 373.0 M771.3 371.6 L775.1 373.0 L771.6 374.9 M733.9 375.5 L746.0 374.8 M742.2 373.4 L746.0 374.8 L742.4 376.6 M790.0 374.0 L811.6 373.2 M807.9 371.7 L811.6 373.2 L808.0 375.0 M756.2 373.2 L770.9 371.7 M767.1 370.5 L770.9 371.7 L767.5 373.7 M750.7 365.3 L763.9 367.2 M760.6 365.1 L763.9 367.2 L760.1 368.3 M787.3 370.9 L802.3 369.6 M798.6 368.3 L802.3 369.6 L798.8 371.5 M729.9 367.6 L748.8 369.0 M745.3 367.1 L748.8 369.0 L745.1 370.3 M747.8 374.3 L766.7 374.8 M763.1 373.0 L766.7 374.8 L763.0 376.3 M767.8 373.3 L780.9 373.8 M777.3 372.1 L780.9 373.8 L777.2 375.3 M742.5 370.2 L761.3 370.7 M757.7 369.0 L761.3 370.7 L757.6 372.2 M743.4 376.7 L760.5 376.6 M756.8 374.9 L760.5 376.6 L756.8 378.2 M724.4 391.5 L734.9 392.5 M731.4 390.5 L734.9 392.5 L731.1 393.8 M740.7 394.2 L755.1 395.6 M751.7 393.6 L755.1 395.6 L751.3 396.8 M736.5 392.4 L751.9 393.9 M748.4 392.0 L751.9 393.9 L748.1 395.2 M736.6 394.4 L753.3 395.5 M749.8 393.6 L753.3 395.5 L749.6 396.9 M759.1 395.6 L772.3 396.2 M768.7 394.4 L772.3 396.2 L768.6 397.6 M730.0 394.4 L747.4 394.8 M743.7 393.1 L747.4 394.8 L743.7 396.3 M748.9 393.2 L764.2 392.7 M760.5 391.2 L764.2 392.7 L760.6 394.5 M752.1 391.8 L766.7 392.1 M763.1 390.4 L766.7 392.1 L763.1 393.6 M746.5 393.7 L760.8 394.9 M757.3 393.0 L760.8 394.9 L757.1 396.2 M725.0 387.6 L737.4 388.6 M733.9 386.6 L737.4 388.6 L733.6 389.9 M731.9 392.9 L746.2 392.0 M742.4 390.6 L746.2 392.0 L742.6 393.8 M741.0 388.3 L749.5 387.7 M745.8 386.3 L749.5 387.7 L746.0 389.5 M735.4 387.8 L745.4 386.9 M741.6 385.6 L745.4 386.9 L741.9 388.9 M740.8 389.8 L754.9 390.6 M751.3 388.7 L754.9 390.6 L751.1 392.0 M732.6 395.0 L740.6 395.2 M737.0 393.5 L740.6 395.2 L736.9 396.8 M734.0 390.1 L743.2 391.6 M739.8 389.4 L743.2 391.6 L739.3 392.6 M731.1 448.9 L747.7 449.2 M744.1 447.5 L747.7 449.2 L744.0 450.7 M750.0 454.0 L766.1 456.9 M762.8 454.6 L766.1 456.9 L762.2 457.8 M780.0 458.1 L799.4 460.0 M795.9 458.0 L799.4 460.0 L795.6 461.3 M730.6 449.9 L747.0 451.6 M743.5 449.6 L747.0 451.6 L743.2 452.8 M795.3 465.3 L811.8 466.3 M808.3 464.5 L811.8 466.3 L808.1 467.7 M788.3 454.8 L797.8 456.5 M794.5 454.3 L797.8 456.5 L793.9 457.5 M757.7 452.9 L774.5 455.5 M771.1 453.3 L774.5 455.5 L770.6 456.6 M731.3 452.9 L742.5 453.7 M739.0 451.8 L742.5 453.7 L738.7 455.1 M797.0 459.6 L818.4 462.3 M815.0 460.2 L818.4 462.3 L814.6 463.5 M755.5 453.8 L777.3 455.3 M773.7 453.4 L777.3 455.3 L773.5 456.7 M735.7 452.2 L757.5 453.7 M754.0 451.8 L757.5 453.7 L753.7 455.1 M721.5 452.2 L731.2 454.1 M727.9 451.8 L731.2 454.1 L727.3 455.0 M738.8 452.3 L757.7 454.8 M754.3 452.7 L757.7 454.8 L753.9 455.9 M691.5 449.5 L703.3 452.3 M700.1 449.9 L703.3 452.3 L699.4 453.0 M776.0 455.9 L787.8 456.4 M784.2 454.6 L787.8 456.4 L784.0 457.9 M798.8 458.9 L815.3 460.3 M811.8 458.4 L815.3 460.3 L811.5 461.6 M760.9 457.8 L779.3 458.2 M775.7 456.5 L779.3 458.2 L775.7 459.8 M773.6 456.2 L789.1 457.2 M785.6 455.4 L789.1 457.2 L785.4 458.6 M722.7 452.9 L737.2 454.0 M733.6 452.1 L737.2 454.0 L733.4 455.3 M772.0 458.9 L780.5 459.7 M777.0 457.7 L780.5 459.7 L776.7 461.0 M740.1 458.7 L760.5 460.3 M757.0 458.4 L760.5 460.3 L756.8 461.6 M691.6 452.0 L705.6 453.7 M702.2 451.6 L705.6 453.7 L701.8 454.9 M767.9 458.9 L782.6 461.6 M779.4 459.4 L782.6 461.6 L778.8 462.6 M732.4 452.6 L752.3 453.2 M748.7 451.4 L752.3 453.2 L748.6 454.7 M722.6 455.9 L731.5 458.4 M728.5 455.8 L731.5 458.4 L727.6 459.0 M766.4 456.7 L778.4 459.1 M775.1 456.8 L778.4 459.1 L774.5 460.0 M790.2 456.4 L804.9 458.1 M801.4 456.1 L804.9 458.1 L801.1 459.3 M744.7 453.3 L754.9 455.1 M751.6 452.9 L754.9 455.1 L751.0 456.1 M779.3 454.5 L790.5 457.0 M787.3 454.6 L790.5 457.0 L786.6 457.8 M777.1 460.2 L785.5 462.4 M782.3 459.9 L785.5 462.4 L781.5 463.0 M797.7 465.8 L815.5 466.0 M811.8 464.3 L815.5 466.0 L811.8 467.6 M782.6 456.4 L799.7 459.2 M796.3 457.0 L799.7 459.2 L795.8 460.2 M768.4 454.0 L780.5 456.7 M777.3 454.3 L780.5 456.7 L776.5 457.5 M706.5 451.9 L720.3 452.4 M716.7 450.6 L720.3 452.4 L716.6 453.9 M758.5 452.0 L768.0 453.1 M764.5 451.1 L768.0 453.1 L764.2 454.3 M697.9 445.4 L714.0 447.7 M710.6 445.6 L714.0 447.7 L710.1 448.8 M786.6 456.0 L800.7 456.9 M797.1 455.0 L800.7 456.9 L796.9 458.3 M756.0 456.2 L777.2 457.3 M773.6 455.5 L777.2 457.3 L773.4 458.7 M696.1 451.6 L706.2 453.5 M703.0 451.3 L706.2 453.5 L702.4 454.5 M745.6 459.2 L761.4 461.1 M758.0 459.0 L761.4 461.1 L757.6 462.3 M719.0 452.7 L730.5 455.0 M727.2 452.7 L730.5 455.0 L726.6 455.9 M746.9 451.6 L758.2 452.7 M754.7 450.7 L758.2 452.7 L754.4 454.0 M771.0 454.7 L789.0 456.7 M785.6 454.7 L789.0 456.7 L785.2 457.9 M699.4 451.7 L708.7 452.1 M705.1 450.3 L708.7 452.1 L704.9 453.6 M755.3 453.6 L775.6 455.0 M772.1 453.1 L775.6 455.0 L771.9 456.4 M725.6 455.9 L734.0 458.1 M730.8 455.6 L734.0 458.1 L730.0 458.7 M695.9 446.2 L717.2 448.2 M713.8 446.2 L717.2 448.2 L713.4 449.5 M714.5 447.9 L736.2 449.9 M732.7 447.9 L736.2 449.9 L732.4 451.1 M780.3 455.3 L797.0 456.4 M793.5 454.5 L797.0 456.4 L793.3 457.8 M715.9 450.2 L732.4 451.2 M728.9 449.4 L732.4 451.2 L728.7 452.6 M732.4 450.0 L752.1 452.0 M748.6 450.0 L752.1 452.0 L748.3 453.2 M778.5 458.1 L798.4 459.6 M794.9 457.7 L798.4 459.6 L794.6 461.0 M755.2 456.9 L773.6 458.1 M770.0 456.2 L773.6 458.1 L769.8 459.5 M700.7 445.5 L711.5 445.6 M707.9 444.0 L711.5 445.6 L707.8 447.2 M787.8 459.6 L806.5 459.6 M802.8 457.9 L806.5 459.6 L802.8 461.2 M729 392 L733.500 393 L730 394.5 M729 395 L733.500 396 L730 397.5 M729 398 L733.500 399 L730 400.5 M729 401 L733.500 402 L730 403.5 M729 404 L733.500 405 L730 406.5 M729 407 L733.500 408 L730 409.5 M729 410 L733.500 411 L730 412.5 M729 413 L733.500 414 L730 415.5 M729 416 L733.500 417 L730 418.5 M729 419 L733.500 420 L730 421.5 M729 422 L733.500 423 L730 424.5 M729 425 L733.500 426 L730 427.5 M729 428 L733.500 429 L730 430.5 M729 431 L733.500 432 L730 433.5 M729 434 L733.500 435 L730 436.5" fill="none" stroke="#2e9ad0" stroke-width="1.1"/>
<path d="M486.5 448 V595 M498.5 448 V586 M507.5 448 V591 M515.5 448 V599 M519.5 448 V632 M509 448 V560" fill="none" stroke="#e0665a" stroke-width="1.600"/>
<path d="M762.5 279 V367 M755.5 293 V365 M741.5 306 V365 M723.5 308 V372 M767.5 366 V455 M760.5 378 V453 M746.5 388 V452 M727.5 384 V448 M719.5 357 V372 M721.5 359 V372 M703.5 458 V472 M562.5 440 V448 M694 218 L722 391" fill="none" stroke="#d8705e" stroke-width="1"/>
<path d="M573.500 453 A155 145 0 0 1 418 598" fill="none" stroke="#d08878" stroke-width="1"/>
<path d="M421 596 L418 598 L421 600" fill="none" stroke="#d08878" stroke-width="1"/>
<path d="M204 416.500 H209" stroke="#d8806e" stroke-width="1"/>
<path d="M268 403 H254 Q246.500 404 246.500 416 Q246.500 428 254 429 H268 M268 407 H256 Q250 408 250 416 Q250 424 256 425 H268" fill="none" stroke="#4c4c4c" stroke-width="1"/>
<path d="M256 413.500 H259 M252.500 418.500 H254 M260 419.500 H264" stroke="#e0e0c8" stroke-width="1"/>
<rect x="393" y="302" width="2" height="4" fill="#6c7c6c"/>
<text x="392.300" y="333.200" font-family="Liberation Sans, sans-serif" font-size="11" fill="#f0f0f0" textLength="6" lengthAdjust="spacingAndGlyphs">Z</text>
<text x="392" y="402" font-family="Liberation Sans, sans-serif" font-size="9" fill="#d8f0c0">Y</text>
<text x="474.500" y="413" font-family="Liberation Sans, sans-serif" font-size="10" fill="#e0e8e0">X</text>
<rect x="906" y="165.500" width="17" height="335" fill="url(#gBar)"/>
<g fill="#ffb43a" opacity="0.5"><rect x="906" y="430.900" width="17" height="1.200"/><rect x="906" y="433" width="17" height="1.200"/><rect x="906" y="434.900" width="17" height="1.200"/><rect x="906" y="436.800" width="17" height="2"/></g>
</svg>
<div class="mono" id="tl" style="left:11px;top:470px;">YAK55_1
Wing Span      =     9.000 m
xyProj. Span   =     8.000 m
Wing Area      =    14.357 m²
xyProj. Area   =    14.357 m²
Plane Mass     =     0.000 kg
Wing Load      =     0.000 kg/m²
Root Chord     =     2.550 m
MAC            =     1.901 m
TipTwist       =     0.000°
Aspect Ratio   =     5.642
Taper Ratio    =     2.452
Root-Tip Sweep =    45.769°
XNP = d(XCp.Cl)/dCl =     1.254 m
Mesh elements  =   779</div>
<div class="mono" id="tr" style="right:11px;top:452px;text-align:right;">V =   60.00 m/s
Alpha =    0.000°  
Beta =    0.000°  
CL =    0.048   
CD =    0.010   
Efficiency =    0.031   
CL/CD =    4.718   
Cm =    0.023   
Cl =    0.000   
Cn =   -0.000   
X_CP =    0.020 m 
X_CG =    1.000 m 
Wing Flap 1 Moment =  9.3102 N.m
Wing Flap 2 Moment =-52.9457 N.m
Wing Flap 3 Moment =-52.9457 N.m
Wing Flap 4 Moment =  9.3102 N.m</div>
</div>
<div id="status"><span>YAK55_BEZHVOSTA</span><i style="position:absolute;left:910px;top:3px;width:1px;height:14px;background:#cfcfcf"></i><i style="position:absolute;left:924px;top:12px;width:2px;height:2px;background:#b4b4b4;box-shadow:-3px 3px 0 #b4b4b4,0 3px 0 #b4b4b4"></i></div>
</body>
</html>
